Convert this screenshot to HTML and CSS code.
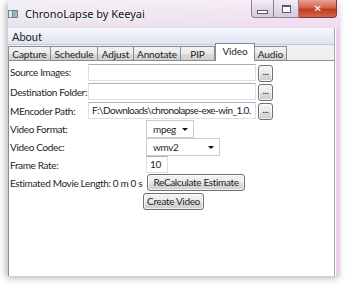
FILE: index.html
```html
<!DOCTYPE html>
<html lang="en">
<head>
  <meta charset="UTF-8">
  <title>ChronoLapse by Keeyai</title>
  <link rel="stylesheet" href="styles.css">
</head>
<body>

  <div class="window">

    <!-- title bar -->
    <div class="titlebar">
      <svg class="app-icon" width="10" height="8" viewBox="0 0 10 8">
        <rect x="0" y="0" width="10" height="8" fill="#6d8597"/>
        <rect x="1" y="1" width="3" height="6" fill="#d9efe0"/>
        <rect x="5" y="1" width="4" height="6" fill="#9cb3c4"/>
      </svg>
      <span class="title">ChronoLapse by Keeyai</span>
      <div class="caption-btns">
        <div class="cap-btn min"><span class="min-glyph"></span></div>
        <div class="cap-btn max"><span class="max-glyph"></span></div>
        <div class="cap-btn close">&#x2715;</div>
      </div>
    </div>

    <div class="frame-body">
      <div class="client">
        <div class="menubar"><span class="menu-item">About</span></div>

        <div class="tabs">
          <div class="tab t-capture">Capture</div>
          <div class="tab t-schedule">Schedule</div>
          <div class="tab t-adjust">Adjust</div>
          <div class="tab t-annotate">Annotate</div>
          <div class="tab t-pip">PIP</div>
          <div class="tab active">Video</div>
          <div class="tab t-audio">Audio</div>
        </div>

        <div class="panel">
          <div class="row r1">
            <span class="label path-label">Source Images:</span>
            <div class="textbox path"></div>
            <div class="btn browse">...</div>
          </div>
          <div class="row r2">
            <span class="label path-label">Destination Folder:</span>
            <div class="textbox path"></div>
            <div class="btn browse">...</div>
          </div>
          <div class="row r3">
            <span class="label path-label">MEncoder Path:</span>
            <div class="textbox path path-text">F:\Downloads\chronolapse-exe-win_1.0.</div>
            <div class="btn browse">...</div>
          </div>
          <div class="row r4">
            <span class="label opt-label">Video Format:</span>
            <div class="select fmt">mpeg<span class="arrow"></span></div>
          </div>
          <div class="row r5">
            <span class="label opt-label">Video Codec:</span>
            <div class="select codec">wmv2<span class="arrow"></span></div>
          </div>
          <div class="row r6">
            <span class="label opt-label">Frame Rate:</span>
            <div class="textbox rate">10</div>
          </div>
          <div class="row r7">
            <span class="label est-label">Estimated Movie Length: 0 m 0 s</span>
            <div class="btn recalc">ReCalculate Estimate</div>
          </div>
          <div class="row r8">
            <div class="btn create">Create Video</div>
          </div>
        </div>
      </div>
      <div class="right-frame"></div>
    </div>

  </div>

</body>
</html>
```

FILE: styles.css
```css
body {
  margin: 0;
  background-color: #ffffff;
  font-family: Lato, 'Liberation Sans', sans-serif;
  font-size: 10px;
  letter-spacing: -0.35px;
  color: #1e1e1e;
  width: 350px;
  height: 285px;
  overflow: hidden;
}

.window {
  margin-left: 8px;
  width: 332px;
  height: 276px;
  background: linear-gradient(90deg, #e6e0ea 0%, #eadcec 60%, #f0d6ee 100%);
  border-radius: 0 6px 0 0;
  box-shadow: -2px 2px 7px rgba(0, 0, 0, 0.3);
  display: flex;
  flex-direction: column;
}

.titlebar {
  height: 28px;
  flex-shrink: 0;
  display: flex;
  align-items: flex-start;
  position: relative;
  background: linear-gradient(180deg, rgba(255,255,255,0.5) 0%, rgba(255,255,255,0.1) 100%);
}

.app-icon {
  margin: 10px 0 0 0;
}

.title {
  margin: 6px 0 0 7px;
  font-family: 'Noto Sans', sans-serif;
  font-size: 11px;
  letter-spacing: 0;
  color: #111;
  text-shadow: 0 0 6px #fff, 0 0 3px #fff;
}

.caption-btns {
  position: absolute;
  top: 0;
  right: 3px;
  display: flex;
}

.cap-btn {
  height: 17px;
  border: 1px solid #8b7f94;
  border-top: none;
  display: flex;
  align-items: center;
  justify-content: center;
}

.cap-btn.min {
  width: 21px;
  border-radius: 0 0 0 4px;
  background: linear-gradient(180deg, #f3eef5 0%, #e3d9e8 50%, #d6cade 100%);
}

.cap-btn.max {
  width: 24px;
  border-left: none;
  background: linear-gradient(180deg, #f3eef5 0%, #e3d9e8 50%, #d6cade 100%);
}

.cap-btn.close {
  width: 37px;
  border-left: none;
  border-color: #7a3a3a;
  border-radius: 0 0 4px 0;
  background: linear-gradient(180deg, #e8a293 0%, #d2644f 45%, #c13a22 55%, #d0664c 100%);
  color: #ffffff;
  font-family: 'DejaVu Sans', sans-serif;
  font-size: 10px;
  font-weight: bold;
}

.min-glyph {
  width: 9px;
  height: 2px;
  margin-top: 6px;
  border: 1px solid #555a66;
  background: #fff;
}

.max-glyph {
  width: 7px;
  height: 5px;
  border: 1px solid #555a66;
  border-top-width: 2px;
  background: #fff;
}

.frame-body {
  flex: 1;
  display: flex;
}

.client {
  width: 326px;
  display: flex;
  flex-direction: column;
  background: #f0f0f0;
  border-right: 1px solid #a9a3ad;
}

.right-frame {
  flex: 1;
  border-left: 1px solid #ffffff;
  background: linear-gradient(90deg, #e9d2ea 0%, #f1cdef 100%);
}

.menubar {
  height: 16px;
  flex-shrink: 0;
  background: linear-gradient(180deg, #f5f8fc 0%, #e7edf6 60%, #dde5f1 100%);
  border-bottom: 1px solid #c4cad4;
  display: flex;
  align-items: center;
}

.menu-item {
  margin-left: 4px;
  font-size: 11px;
  letter-spacing: 0;
}

.tabs {
  height: 15px;
  flex-shrink: 0;
  display: flex;
  align-items: flex-end;
  position: relative;
  z-index: 1;
}

.tab {
  height: 13px;
  margin-right: -1px;
  border: 1px solid #898c95;
  border-bottom: none;
  background: linear-gradient(180deg, #f2f2f2 0%, #ebebeb 50%, #dddddd 51%, #cfcfcf 100%);
  line-height: 14px;
  text-align: center;
  letter-spacing: -0.1px;
  flex-shrink: 0;
}

.t-capture { width: 41px; }
.t-schedule { width: 46px; }
.t-adjust { width: 35px; }
.t-annotate { width: 46px; }
.t-pip { width: 33px; }
.t-audio { width: 31px; }

.tab.active {
  width: 38px;
  height: 17px;
  margin: 0 -1px -1px 1px;
  background: #ffffff;
  line-height: 15px;
  position: relative;
  z-index: 2;
}

.tab.active + .tab {
  margin-left: 0;
}

.panel {
  flex: 1;
  background: #ffffff;
  border: 1px solid #898c95;
  border-right: none;
  border-bottom: none;
  padding-top: 1px;
}

.row {
  display: flex;
  align-items: center;
}

.row > * {
  flex-shrink: 0;
}

.r1 { height: 20px; }
.r2 { height: 19px; }
.r3 { height: 19px; }
.r4 { height: 18px; }
.r5 { height: 18px; }
.r6 { height: 17px; }
.r7 { height: 19px; }
.r8 { height: 19px; }

.label {
  padding-left: 1px;
  white-space: nowrap;
}

.path-label { width: 78px; }
.opt-label { width: 136px; }
.est-label { width: 137px; }

.textbox {
  height: 15px;
  border: 1px solid #dbdfe6;
  border-top-color: #abadb3;
  background: #ffffff;
  line-height: 15px;
  padding-left: 3px;
  white-space: nowrap;
  overflow: hidden;
  box-sizing: content-box;
}

.textbox.path {
  width: 163px;
}

.path-text {
  letter-spacing: -0.55px;
}

.textbox.rate {
  width: 17px;
}

.select {
  height: 16px;
  border: 1px solid #c9ccd2;
  background: #ffffff;
  line-height: 16px;
  padding-left: 6px;
  position: relative;
}

.select.fmt { width: 40px; }
.select.codec { width: 66px; }

.arrow {
  position: absolute;
  right: 5px;
  top: 7px;
  border-left: 3px solid transparent;
  border-right: 3px solid transparent;
  border-top: 3px solid #111;
}

.btn {
  height: 15px;
  border: 1px solid #707070;
  border-radius: 3px;
  background: linear-gradient(180deg, #f2f2f2 0%, #ebebeb 50%, #dddddd 51%, #cfcfcf 100%);
  line-height: 15px;
  text-align: center;
  white-space: nowrap;
  box-shadow: inset 0 0 0 1px rgba(255, 255, 255, 0.7);
}

.btn.browse {
  width: 13px;
  margin: 2px 0 0 2px;
  line-height: 11px;
}

.btn.recalc {
  width: 96px;
}

.btn.create {
  width: 59px;
  margin-left: 134px;
}
```
